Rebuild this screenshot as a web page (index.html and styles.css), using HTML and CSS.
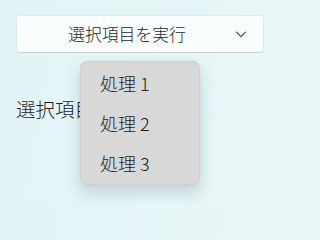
FILE: index.html
```html
<!DOCTYPE html>
<html lang="ja">
<head>
<meta charset="utf-8">
<link rel="stylesheet" href="styles.css">
</head>
<body>
<div class="page">
  <button class="run-btn" type="button">
    <span class="run-label">選択項目を実行</span>
    <svg class="chevron" width="12" height="7" viewBox="0 0 12 7"><path d="M1.5 1.2 L6 5.7 L10.5 1.2" fill="none" stroke="#4a4a4a" stroke-width="1.2" stroke-linecap="round" stroke-linejoin="round"/></svg>
  </button>
  <div class="selected">選択項目:</div>
</div>
<ul class="menu">
  <li class="menu-item">処理 1</li>
  <li class="menu-item">処理 2</li>
  <li class="menu-item">処理 3</li>
</ul>
</body>
</html>
```
FILE: styles.css
```css
html, body {
  margin: 0;
  padding: 0;
}
body {
  width: 285px;
  height: 203px;
  overflow: hidden;
  background: linear-gradient(100deg, #e2f4f6 0%, #e6f6f7 60%, #eaf7f5 100%);
  font-family: "Noto Sans CJK JP", "Noto Sans", sans-serif;
  font-weight: 300;
  color: #1e1e1e;
  position: relative;
}
.page {
  padding: 15px 21px 0 16px;
  display: flex;
  flex-direction: column;
}
.run-btn {
  box-sizing: border-box;
  width: 248px;
  height: 38px;
  display: flex;
  align-items: center;
  gap: 9px;
  padding: 0 16px 0 11px;
  background: #f9fdfd;
  border: 1px solid #dfe8ea;
  border-bottom-color: #c9d3d5;
  border-radius: 4px;
  font-family: inherit;
  font-weight: 300;
  color: #1e1e1e;
}
.run-label {
  flex: 1;
  text-align: center;
  font-size: 16.8px;
  line-height: 24px;
}
.chevron {
  flex: none;
  display: block;
}
.selected {
  margin-top: 43px;
  font-size: 19.5px;
  line-height: 26px;
  white-space: nowrap;
}
.menu {
  position: absolute;
  left: 80px;
  top: 61px;
  width: 120px;
  box-sizing: border-box;
  margin: 0;
  padding: 1px 0;
  list-style: none;
  background: #d8d8d8;
  border: 1px solid rgba(0, 0, 0, 0.04);
  border-radius: 8px;
  box-shadow: 0 8px 16px rgba(0, 40, 50, 0.16), 0 0 2px rgba(0, 0, 0, 0.08);
}
.menu-item {
  height: 40px;
  display: flex;
  align-items: center;
  padding-left: 19px;
  font-size: 18px;
  color: #202020;
}
```
